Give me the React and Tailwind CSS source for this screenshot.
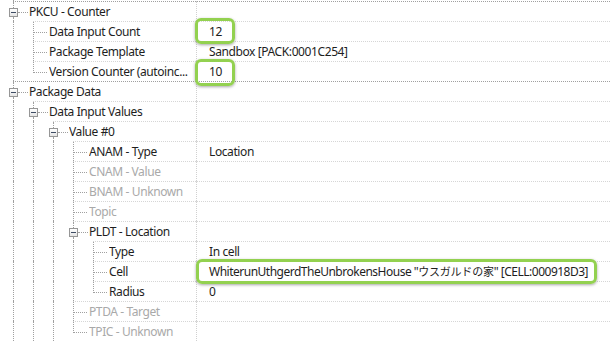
import React from "react";

const rows = [
  { l: 0, t: "PKCU - Counter", box: true, g: [], below: true },
  { l: 1, t: "Data Input Count", v: "12", g: [true], below: true },
  { l: 1, t: "Package Template", v: "Sandbox [PACK:0001C254]", g: [true], below: true },
  { l: 1, t: "Version Counter (autoinc...", v: "10", g: [true], below: false },
  { l: 0, t: "Package Data", box: true, g: [], below: true },
  { l: 1, t: "Data Input Values", box: true, g: [true], below: true },
  { l: 2, t: "Value #0", box: true, g: [true, true], below: true },
  { l: 3, t: "ANAM - Type", v: "Location", g: [true, true, true], below: true },
  { l: 3, t: "CNAM - Value", off: true, g: [true, true, true], below: true },
  { l: 3, t: "BNAM - Unknown", off: true, g: [true, true, true], below: true },
  { l: 3, t: "Topic", off: true, g: [true, true, true], below: true },
  { l: 3, t: "PLDT - Location", box: true, g: [true, true, true], below: true },
  { l: 4, t: "Type", v: "In cell", g: [true, true, true, true], below: true },
  {
    l: 4,
    t: "Cell",
    v: (
      <span className="tracking-[-0.5px]">
        WhiterunUthgerdTheUnbrokensHouse "<span className="text-[11px] tracking-[-0.2px]">ウスガルドの家</span>" [CELL:000918D3]
      </span>
    ),
    g: [true, true, true, true],
    below: true,
  },
  { l: 4, t: "Radius", v: "0", g: [true, true, true, true], below: false },
  { l: 3, t: "PTDA - Target", off: true, g: [true, true, true], below: true },
  { l: 3, t: "TPIC - Unknown", off: true, g: [true, true, true], below: false },
];

const ExpandBox = () => (
  <div className="absolute left-[-4px] top-[6px] w-[9px] h-[9px] border border-[#969696] bg-gradient-to-b from-white to-[#e4e4e4] flex items-center justify-center">
    <div className="w-[5px] h-px bg-[#3d4b63]" />
  </div>
);

const Row = ({ row }) => {
  const line = row.l == 0 ? "border-[#a0a0a0]" : "border-[#d6d6d6]";
  return (
    <div className="flex h-[20px]">
      <div className="w-[196px] shrink-0 flex h-full">
        <div className="w-[3px] shrink-0" />
        {row.g.map((on, i) => (
          <div key={i} className="w-[20px] h-full shrink-0 pl-[10px]">
            {on && <div className="w-px h-full border-l border-dotted border-[#a0a0a0]" />}
          </div>
        ))}
        <div className="w-[10px] shrink-0" />
        <div className={`flex-1 min-w-0 flex h-full border-t border-dotted ${line}`}>
          <div className="relative w-[16px] shrink-0 h-full">
            {row.box ? (
              <>
                <div className="absolute left-0 top-0 h-[6px] w-px border-l border-dotted border-[#a0a0a0]" />
                {row.below && (
                  <div className="absolute left-0 top-[15px] bottom-0 w-px border-l border-dotted border-[#a0a0a0]" />
                )}
                <div className="absolute left-[5px] top-[10px] w-[10px] h-px border-t border-dotted border-[#a0a0a0]" />
                <ExpandBox />
              </>
            ) : (
              <>
                <div
                  className={`absolute left-0 top-0 w-px border-l border-dotted border-[#a0a0a0] ${
                    row.below ? "bottom-0" : "h-[11px]"
                  }`}
                />
                <div className="absolute left-[1px] top-[10px] w-[13px] h-px border-t border-dotted border-[#a0a0a0]" />
              </>
            )}
          </div>
          <div
            className={`flex-1 min-w-0 overflow-hidden whitespace-nowrap leading-[19px] pr-[8px] ${
              row.off ? "text-[#a9a9a9]" : "text-[#1e1e1e]"
            }`}
          >
            {row.t}
          </div>
        </div>
      </div>
      <div
        className={`flex-1 min-w-0 h-full border-t border-l border-dotted ${line} border-l-[#d0d0d0] pl-[12px] leading-[19px] text-[#1e1e1e] whitespace-nowrap overflow-hidden`}
      >
        {row.v}
      </div>
    </div>
  );
};

const Highlight = ({ className }) => (
  <div
    className={`absolute border-[3px] border-[#93d150] rounded-[6px] shadow-[0_1px_3px_rgba(0,0,0,0.35)] ${className}`}
  />
);

export default function App() {
  return (
    <div className="relative w-[610px] h-[341px] overflow-hidden bg-white font-['Noto_Sans','Noto_Sans_CJK_JP',sans-serif] text-[12px] tracking-[-0.4px]">
      <div className="flex h-px">
        <div className="w-[13px]" />
        <div className="w-px h-px bg-[#a0a0a0]" />
      </div>
      {rows.map((row, index) => (
        <Row row={row} key={index} />
      ))}
      <Highlight className="left-[195px] top-[18px] w-[40px] h-[26px]" />
      <Highlight className="left-[195px] top-[59px] w-[40px] h-[27px]" />
      <Highlight className="left-[196px] top-[259px] w-[401px] h-[25px]" />
    </div>
  );
}
